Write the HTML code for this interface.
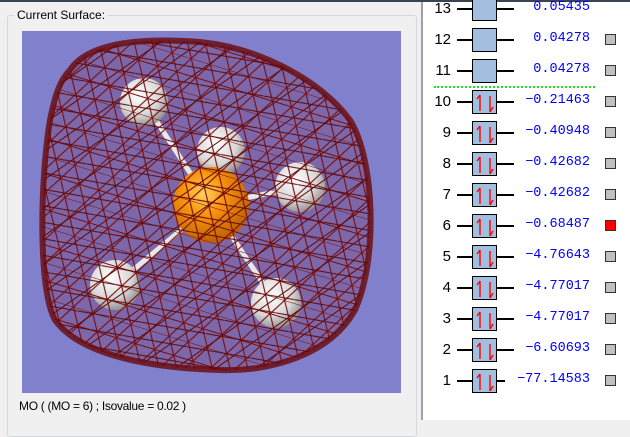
<!DOCTYPE html>
<html><head><style>
body{margin:0;width:630px;height:420px;background:#f0f0f0;position:relative;overflow:hidden;font-family:"Liberation Sans",sans-serif}
.top{position:absolute;left:0;top:0;width:630px;height:2px;background:#3a4450}
.grp{position:absolute;left:7px;top:15px;width:408px;height:420px;border:1px solid #d5d9de;border-radius:3px}
.lbl{position:absolute;left:14px;top:8px;font-size:12px;background:#f0f0f0;padding:0 3px;color:#000}
.cap{position:absolute;left:19px;top:399px;font-size:12px;color:#000;letter-spacing:-.3px}
.rp{position:absolute;left:421px;top:2px;width:209px;height:418px;background:#fff;border-left:2px solid #a0a0a0}
.row{position:absolute;left:0;height:24px;width:209px}
.n{position:absolute;right:181px;top:3px;font-size:15px;color:#000}
.l1{position:absolute;left:34px;top:11px;width:16px;height:1.5px;background:#000}
.bx{position:absolute;left:49px;top:0;width:23px;height:22px;border:1px solid #000;background:#a2bfdf}
.l2{position:absolute;left:74px;top:11px;width:17px;height:1.5px;background:#000}
.v{position:absolute;right:42px;top:3px;font-family:"Liberation Mono",monospace;font-size:13.5px;color:#0000ff}
.sq{position:absolute;left:182px;top:6px;width:9px;height:9px;border:1px solid #333;background:#c0c0c0}
</style></head><body>
<div class="top"></div>
<div class="grp"></div>
<div class="lbl">Current Surface:</div>
<svg style="position:absolute;left:22px;top:31px" width="379" height="362" viewBox="22 31 379 362">
<defs>
<pattern id="m" width="20" height="34" patternUnits="userSpaceOnUse" patternTransform="rotate(17)">
<path d="M0 0L20 0M0 17L20 17M0 0L10 17L20 0M0 34L10 17L20 34M0 17L-10 34M20 17L30 34" stroke="#7a0c0c" stroke-width="1.1" fill="none"/>
</pattern>
<pattern id="m2" width="23" height="23" patternUnits="userSpaceOnUse" patternTransform="rotate(-35)">
<path d="M0 0L23 23M0 11.5L23 11.5" stroke="#600808" stroke-width="1" fill="none"/>
</pattern>
<radialGradient id="o" cx=".4" cy=".35" r=".7"><stop offset="0" stop-color="#ffd060"/><stop offset=".4" stop-color="#f8930c"/><stop offset="1" stop-color="#b85a00"/></radialGradient>
<radialGradient id="h" cx=".4" cy=".35" r=".7"><stop offset="0" stop-color="#ffffff"/><stop offset=".6" stop-color="#d8d8d8"/><stop offset="1" stop-color="#888"/></radialGradient>
</defs>
<rect x="22" y="31" width="379" height="362" fill="#8080cc"/>
<path d="M70 70C90 40 150 38 200 42C260 48 320 80 350 120C375 160 378 260 355 310C330 355 270 372 220 370C150 368 80 355 55 320C38 290 40 180 50 120C55 95 60 80 70 70Z" fill="#70305e" fill-opacity=".3"/>
<g stroke="#e8e8e8" stroke-width="5" stroke-linecap="round">
<line x1="211" y1="205" x2="144" y2="102"/><line x1="211" y1="205" x2="221" y2="151"/><line x1="211" y1="205" x2="300" y2="187"/><line x1="211" y1="205" x2="115" y2="285"/><line x1="211" y1="205" x2="276" y2="303"/>
</g>
<circle cx="144" cy="102" r="24" fill="url(#h)"/>
<circle cx="221" cy="151" r="24" fill="url(#h)"/>
<circle cx="211" cy="205" r="38" fill="url(#o)"/>
<circle cx="300" cy="187" r="25" fill="url(#h)"/>
<circle cx="115" cy="285" r="25" fill="url(#h)"/>
<circle cx="276" cy="303" r="25" fill="url(#h)"/>
<path d="M70 70C90 40 150 38 200 42C260 48 320 80 350 120C375 160 378 260 355 310C330 355 270 372 220 370C150 368 80 355 55 320C38 290 40 180 50 120C55 95 60 80 70 70Z" fill="url(#m)"/>
<path d="M70 70C90 40 150 38 200 42C260 48 320 80 350 120C375 160 378 260 355 310C330 355 270 372 220 370C150 368 80 355 55 320C38 290 40 180 50 120C55 95 60 80 70 70Z" fill="url(#m2)" stroke="#6a0808" stroke-width="6" stroke-opacity=".8"/>
</svg>
<div class="cap">MO ( (MO = 6) ; Isovalue = 0.02 )</div>
<div class="rp">
<svg width="0" height="0" style="position:absolute"><defs><g id="ar"><path d="M7 4V20M7 4L4 8M17 21V5M17 21L20 16" stroke="#f00" stroke-width="1.4" fill="none"/></g></defs></svg>
<div class="row" style="top:-5px"><span class="n">13</span><div class="l1"></div><div class="bx"></div><div class="l2"></div><span class="v">0.05435</span></div>
<div class="row" style="top:26px"><span class="n">12</span><div class="l1"></div><div class="bx"></div><div class="l2"></div><span class="v">0.04278</span><div class="sq"></div></div>
<div class="row" style="top:57px"><span class="n">11</span><div class="l1"></div><div class="bx"></div><div class="l2"></div><span class="v">0.04278</span><div class="sq"></div></div>
<div style="position:absolute;left:11px;top:84px;width:161px;border-top:2px dotted #22dd22"></div>
<div class="row" style="top:88px"><span class="n">10</span><div class="l1"></div><div class="bx"><svg width="23" height="22"><use href="#ar"/></svg></div><div class="l2"></div><span class="v">−0.21463</span><div class="sq"></div></div>
<div class="row" style="top:119px"><span class="n">9</span><div class="l1"></div><div class="bx"><svg width="23" height="22"><use href="#ar"/></svg></div><div class="l2"></div><span class="v">−0.40948</span><div class="sq"></div></div>
<div class="row" style="top:150px"><span class="n">8</span><div class="l1"></div><div class="bx"><svg width="23" height="22"><use href="#ar"/></svg></div><div class="l2"></div><span class="v">−0.42682</span><div class="sq"></div></div>
<div class="row" style="top:181px"><span class="n">7</span><div class="l1"></div><div class="bx"><svg width="23" height="22"><use href="#ar"/></svg></div><div class="l2"></div><span class="v">−0.42682</span><div class="sq"></div></div>
<div class="row" style="top:212px"><span class="n">6</span><div class="l1"></div><div class="bx"><svg width="23" height="22"><use href="#ar"/></svg></div><div class="l2"></div><span class="v">−0.68487</span><div class="sq" style="background:#f00"></div></div>
<div class="row" style="top:243px"><span class="n">5</span><div class="l1"></div><div class="bx"><svg width="23" height="22"><use href="#ar"/></svg></div><div class="l2"></div><span class="v">−4.76643</span><div class="sq"></div></div>
<div class="row" style="top:274px"><span class="n">4</span><div class="l1"></div><div class="bx"><svg width="23" height="22"><use href="#ar"/></svg></div><div class="l2"></div><span class="v">−4.77017</span><div class="sq"></div></div>
<div class="row" style="top:305px"><span class="n">3</span><div class="l1"></div><div class="bx"><svg width="23" height="22"><use href="#ar"/></svg></div><div class="l2"></div><span class="v">−4.77017</span><div class="sq"></div></div>
<div class="row" style="top:336px"><span class="n">2</span><div class="l1"></div><div class="bx"><svg width="23" height="22"><use href="#ar"/></svg></div><div class="l2"></div><span class="v">−6.60693</span><div class="sq"></div></div>
<div class="row" style="top:367px"><span class="n">1</span><div class="l1"></div><div class="bx"><svg width="23" height="22"><use href="#ar"/></svg></div><div class="l2" style="width:8px"></div><span class="v">−77.14583</span><div class="sq"></div></div>
</div>
</body></html>
